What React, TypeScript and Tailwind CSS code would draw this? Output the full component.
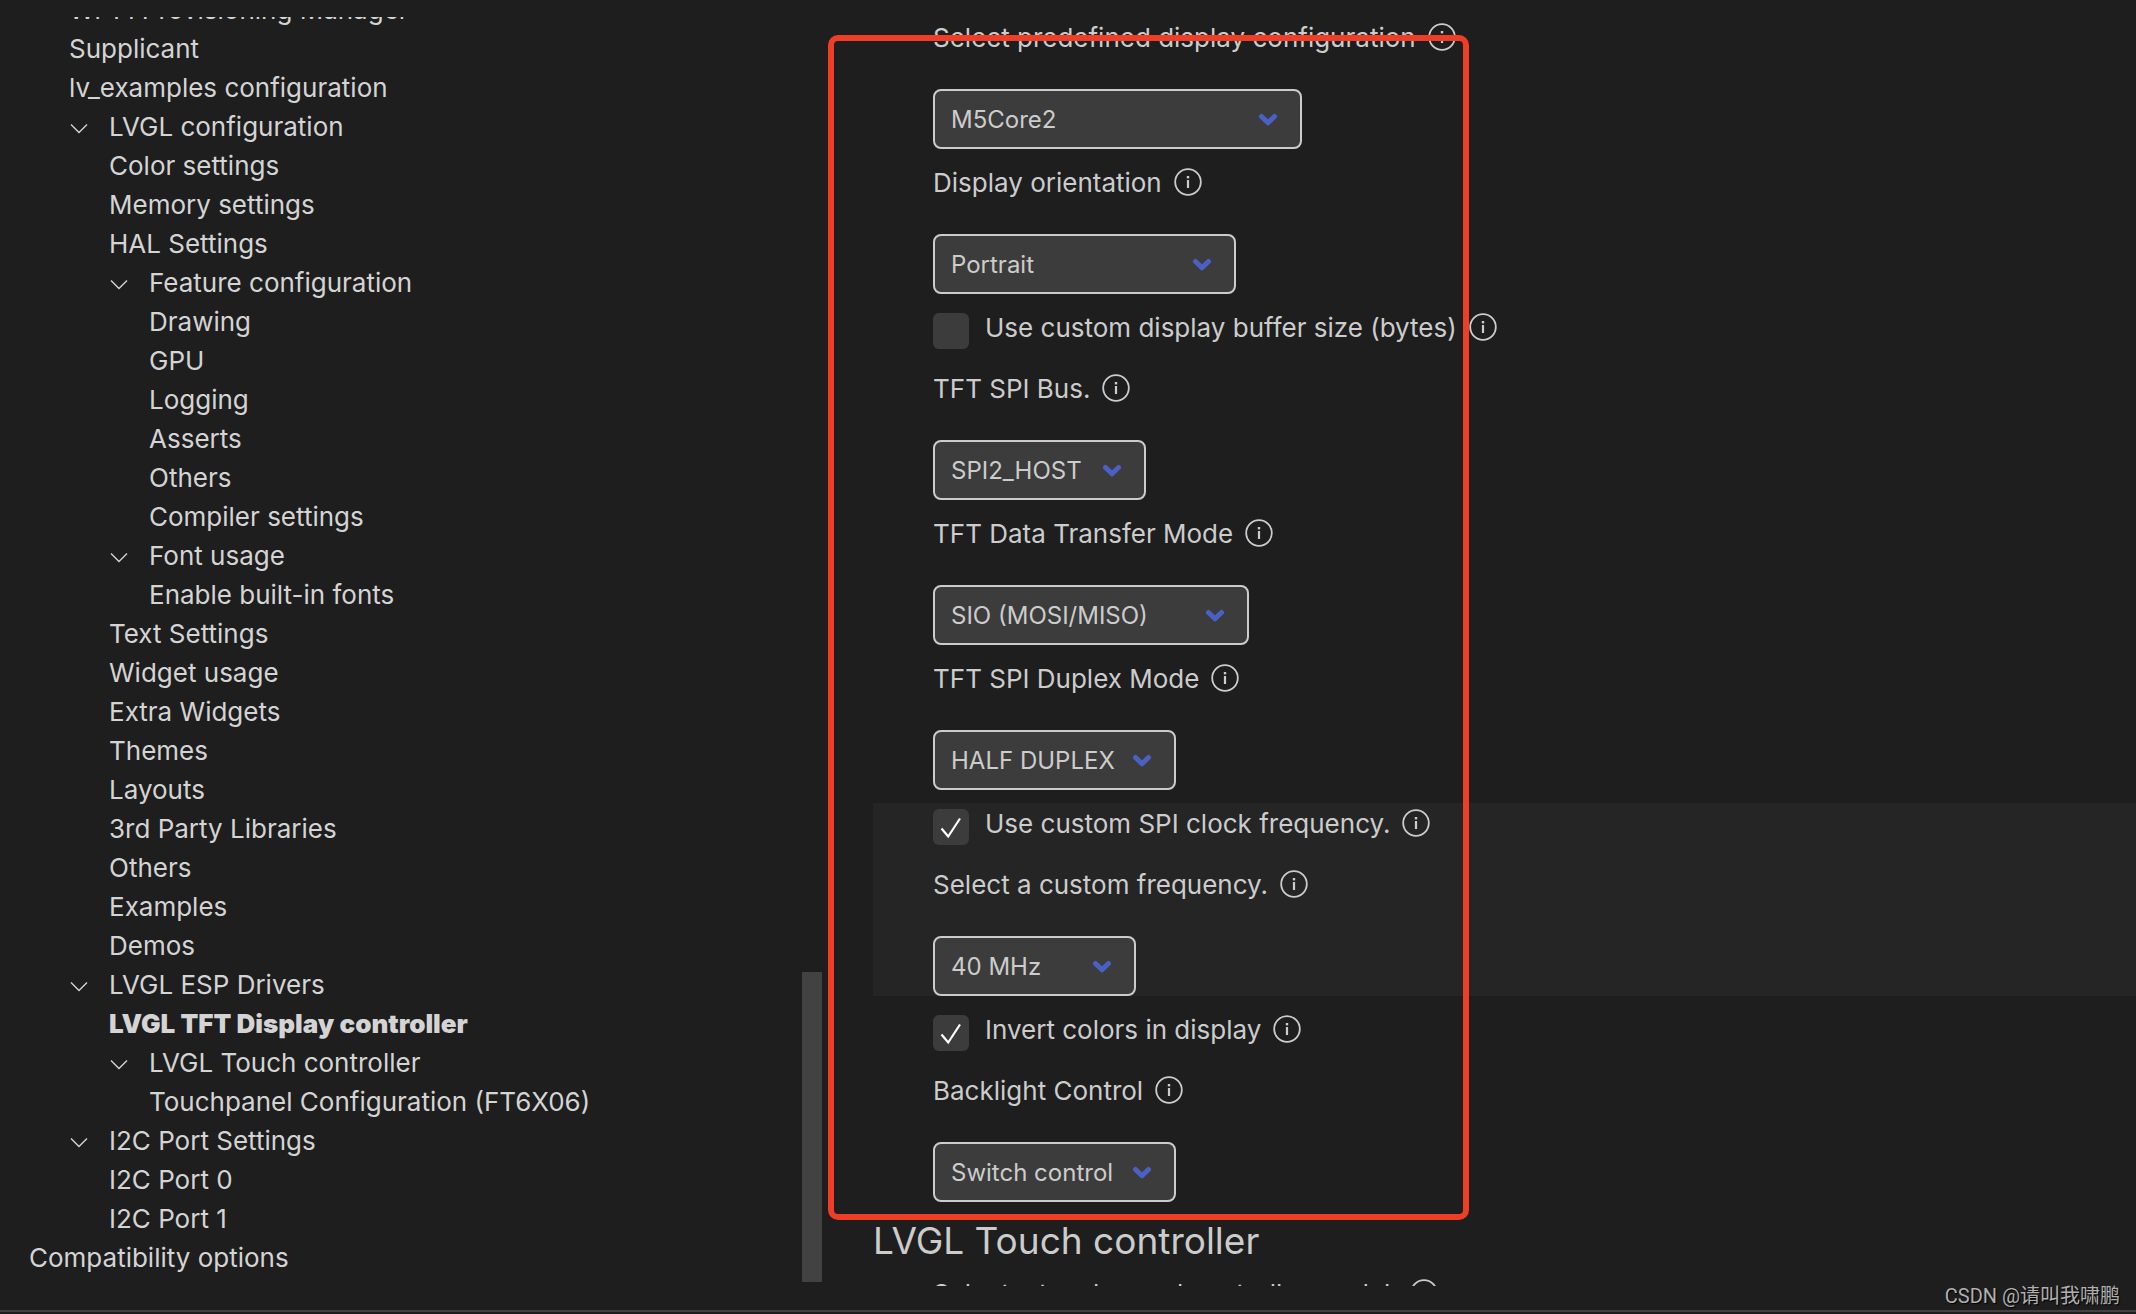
import React, { useState } from 'react';

type TreeNode = {
  label: string;
  active?: boolean;
  children?: TreeNode[];
};

const TREE: TreeNode[] = [
  {
    label: 'Component config',
    children: [
      { label: 'Wi-Fi Provisioning Manager' },
      { label: 'Supplicant' },
      { label: 'lv_examples configuration' },
      {
        label: 'LVGL configuration',
        children: [
          { label: 'Color settings' },
          { label: 'Memory settings' },
          { label: 'HAL Settings' },
          {
            label: 'Feature configuration',
            children: [
              { label: 'Drawing' },
              { label: 'GPU' },
              { label: 'Logging' },
              { label: 'Asserts' },
              { label: 'Others' },
              { label: 'Compiler settings' },
            ],
          },
          { label: 'Font usage', children: [{ label: 'Enable built-in fonts' }] },
          { label: 'Text Settings' },
          { label: 'Widget usage' },
          { label: 'Extra Widgets' },
          { label: 'Themes' },
          { label: 'Layouts' },
          { label: '3rd Party Libraries' },
          { label: 'Others' },
          { label: 'Examples' },
          { label: 'Demos' },
        ],
      },
      {
        label: 'LVGL ESP Drivers',
        children: [
          { label: 'LVGL TFT Display controller', active: true },
          { label: 'LVGL Touch controller', children: [{ label: 'Touchpanel Configuration (FT6X06)' }] },
        ],
      },
      {
        label: 'I2C Port Settings',
        children: [{ label: 'I2C Port 0' }, { label: 'I2C Port 1' }],
      },
    ],
  },
];

const TreeItem: React.FC<{ node: TreeNode }> = ({ node }) => {
  const [open, setOpen] = useState(true);

  if (!node.children) {
    return (
      <li>
        <a href="#" className={`block h-[39px] leading-[39px] whitespace-nowrap ${node.active ? 'font-black' : ''}`}>
          {node.label}
        </a>
      </li>
    );
  }

  return (
    <li>
      <button
        type="button"
        aria-expanded={open}
        onClick={() => setOpen(!open)}
        className="flex h-[39px] items-center whitespace-nowrap"
      >
        <span className="w-10 pt-1">
          <svg width="20" height="12" viewBox="0 0 20 12" fill="none" className={open ? '' : '-rotate-90'}>
            <path d="M2 1.5l8 8 8-8" stroke="currentColor" strokeWidth="1.4" />
          </svg>
        </span>
        {node.label}
      </button>
      {open && (
        <ul className="pl-10">
          {node.children.map((child, i) => <TreeItem key={i} node={child} />)}
        </ul>
      )}
    </li>
  );
};

const Info = ({ about }: { about: string }) => (
  <button type="button" aria-label={`Help: ${about}`} className="shrink-0">
    <svg width="28" height="28" viewBox="0 0 28 28" fill="none">
      <circle cx="14" cy="14" r="12.8" stroke="currentColor" strokeWidth="1.8" />
      <rect x="12.8" y="8" width="2.4" height="2.4" fill="currentColor" />
      <rect x="12.9" y="12" width="2.2" height="8" fill="currentColor" />
    </svg>
  </button>
);

type SelectFieldProps = { id: string; label: string; options: string[]; width: string };

const SelectField: React.FC<SelectFieldProps> = ({ id, label, options, width }) => (
  <div className="pl-[60px]">
    <div className="flex h-10 items-center gap-3 whitespace-nowrap">
      <label htmlFor={id}>{label}</label>
      <Info about={label} />
    </div>
    <div className={`relative mt-8 ${width}`}>
      <select
        id={id}
        className="block h-[60px] w-full appearance-none rounded-lg border-2 border-[#cccccc] bg-[#3c3c3c] pl-4 pr-12 pt-0.5 text-2xl"
      >
        {options.map(o => <option key={o}>{o}</option>)}
      </select>
      <svg
        width="20" height="14" viewBox="0 0 20 14" fill="none"
        className="pointer-events-none absolute right-6 top-6"
      >
        <path d="M3.5 3.5L10 9.8l6.5-6.3" stroke="#4b60c3" strokeWidth="5" strokeLinecap="round" strokeLinejoin="round" />
      </svg>
    </div>
  </div>
);

const CheckField: React.FC<{ id: string; label: string; on?: boolean }> = ({ id, label, on = false }) => {
  const [checked, setChecked] = useState(on);
  return (
    <div className="flex h-12 pl-[60px]">
      <div className="relative mt-1.5 size-9 shrink-0">
        <input
          id={id}
          type="checkbox"
          checked={checked}
          onChange={e => setChecked(e.target.checked)}
          className="block size-9 appearance-none rounded-md bg-[#3c3c3c]"
        />
        {checked && (
          <svg width="36" height="36" viewBox="0 0 36 36" fill="none" className="pointer-events-none absolute inset-0">
            <path d="M8.5 19.5l6.7 8L27 9.5" stroke="#ffffff" strokeWidth="2.2" />
          </svg>
        )}
      </div>
      <div className="ml-4 flex h-10 items-center gap-3 whitespace-nowrap">
        <label htmlFor={id}>{label}</label>
        <Info about={label} />
      </div>
    </div>
  );
};

const App: React.FC = () => {
  return (
    <div className="relative flex h-screen flex-col overflow-hidden bg-[#1e1e1e] pt-[17px] font-['Inter','Noto_Sans_CJK_SC',sans-serif] text-[26px] text-[#cccccc]">
      <div className="flex min-h-0 flex-1">
        <nav aria-label="Menu" className="flex w-[822px] shrink-0 items-end justify-between overflow-hidden pb-1 pl-[29px] text-[#d4d4d4]">
          {/* list is scrolled to its end */}
          <div className="pb-[5px]">
            <ul>
              {TREE.map((n, i) => (
                <li key={i}>
                  <ul className="pl-10">
                    {n.children!.map((child, j) => <TreeItem key={j} node={child} />)}
                  </ul>
                </li>
              ))}
              <TreeItem node={{ label: 'Compatibility options' }} />
            </ul>
          </div>
          <div className="h-[310px] w-5 bg-[#424242]" />
        </nav>

        <main className="min-w-0 flex-1 overflow-hidden pl-[51px]">
          <div className="flex flex-col gap-[13px]">
            <section className="relative flex flex-col gap-[13px]">
              <SelectField id="board" label="Select predefined display configuration" options={['M5Core2']} width="w-[369px]" />
              <SelectField id="orientation" label="Display orientation" options={['Portrait', 'Landscape']} width="w-[303px]" />
              <CheckField id="buffer" label="Use custom display buffer size (bytes)" />
              <SelectField id="bus" label="TFT SPI Bus." options={['SPI2_HOST', 'SPI3_HOST']} width="w-[213px]" />
              <SelectField id="transfer" label="TFT Data Transfer Mode" options={['SIO (MOSI/MISO)']} width="w-[316px]" />
              <SelectField id="duplex" label="TFT SPI Duplex Mode" options={['HALF DUPLEX', 'FULL DUPLEX']} width="w-[243px]" />
              <div className="flex flex-col bg-[#252525]">
                <CheckField id="clock" label="Use custom SPI clock frequency." on />
                <div className="pt-[13px]">
                  <SelectField id="freq" label="Select a custom frequency." options={['40 MHz']} width="w-[203px]" />
                </div>
              </div>
              <CheckField id="invert" label="Invert colors in display" on />
              <SelectField id="backlight" label="Backlight Control" options={['Switch control']} width="w-[243px]" />
              <div className="pointer-events-none absolute -bottom-[18px] -left-[45px] top-[18px] w-[641px] rounded-[10px] border-6 border-[#ef3e26]" />
            </section>
            <h2 className="pt-[7px] text-[37px] leading-[38px]">LVGL Touch controller</h2>
            <SelectField id="touch" label="Select a touch panel controller model." options={['FT6X06']} width="w-[243px]" />
          </div>
        </main>
      </div>
      <div className="h-6 shrink-0" />
      <div className="h-1 shrink-0 border-t-2 border-[#424242]" />
      <p className="absolute bottom-1 right-4 font-['Roboto','Noto_Sans_CJK_SC',sans-serif] text-xl text-[#b0b0b0] [text-shadow:1px_1px_1px_#000]">
        CSDN @请叫我啸鹏
      </p>
    </div>
  );
};

export default App;
